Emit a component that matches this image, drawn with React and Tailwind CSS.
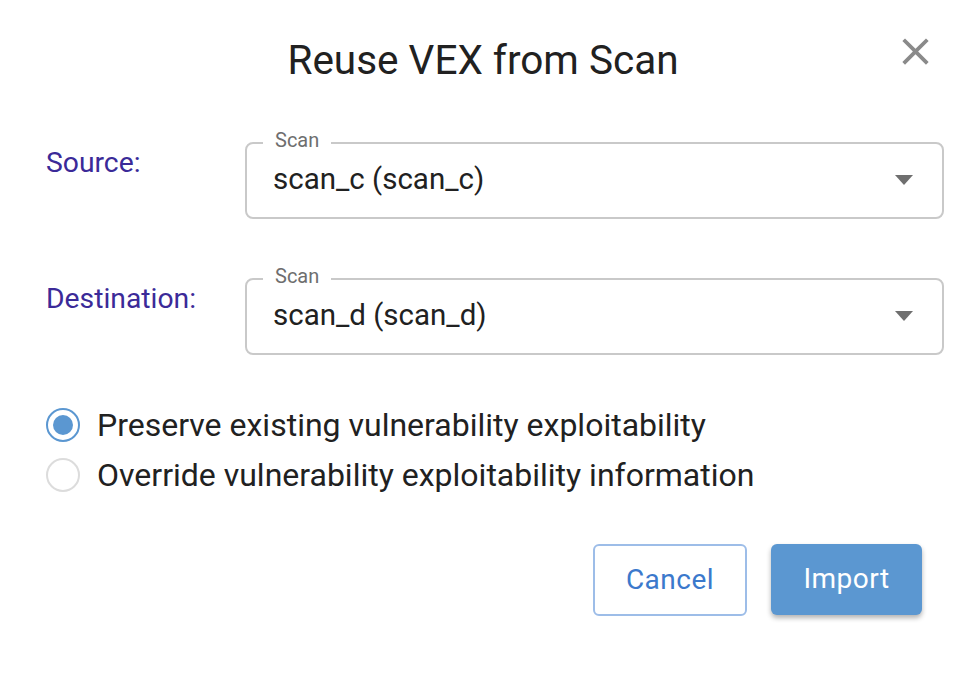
import React from "react";

function SelectBox({ value }) {
  return (
    <div className="relative flex-1 h-[77px] rounded-lg border-2 border-[#c9c9c9] flex items-center pl-[26px] pr-[29px]">
      <span className="absolute left-[16px] top-[-14px] bg-white px-3 text-[20px] leading-none text-[#6e6e6e]">
        Scan
      </span>
      <span className="flex-1 text-[29.5px] leading-none text-[#212121]">{value}</span>
      <svg width="18" height="10" viewBox="0 0 18 10" className="block">
        <polygon points="0,0 18,0 9,10" fill="#6f6f6f" />
      </svg>
    </div>
  );
}

function Radio({ checked, label }) {
  return (
    <div className="flex items-center h-[50px]">
      {checked ? (
        <span className="w-[34px] h-[34px] rounded-full border-2 border-[#5b97d1] flex items-center justify-center">
          <span className="w-[20px] h-[20px] rounded-full bg-[#5b97d1]" />
        </span>
      ) : (
        <span className="w-[34px] h-[34px] rounded-full border-2 border-[#dcdcdc]" />
      )}
      <span className="ml-[17px] text-[32px] leading-none text-[#212121]">{label}</span>
    </div>
  );
}

export default function App() {
  return (
    <div
      className="w-[966px] h-[682px] bg-white flex flex-col"
      style={{ fontFamily: "Roboto, 'Open Sans', sans-serif" }}
    >
      <div className="grid grid-cols-[1fr_auto_1fr] items-start pt-[40px]">
        <div />
        <h2 className="text-[40.5px] leading-none text-[#212121] font-normal">Reuse VEX from Scan</h2>
        <div className="flex justify-end pr-[28px]">
          <svg width="45" height="45" viewBox="0 0 24 24" className="block -mt-[11px]">
            <path
              fill="#8a8a8a"
              d="M19 6.41 17.59 5 12 10.59 6.41 5 5 6.41 10.59 12 5 17.59 6.41 19 12 13.41 17.59 19 19 17.59 13.41 12z"
            />
          </svg>
        </div>
      </div>

      <div className="flex flex-col pl-[46px] pr-[22px] mt-[61px] gap-[59px]">
        <div className="flex items-start">
          <div className="w-[199px] pt-[7px] text-[28.3px] leading-none text-[#3b2a98]">Source:</div>
          <SelectBox value="scan_c (scan_c)" />
        </div>
        <div className="flex items-start">
          <div className="w-[199px] pt-[7px] text-[28.3px] leading-none text-[#3b2a98]">Destination:</div>
          <SelectBox value="scan_d (scan_d)" />
        </div>
      </div>

      <div className="flex flex-col pl-[46px] mt-[45px]">
        <Radio checked label="Preserve existing vulnerability exploitability" />
        <Radio label="Override vulnerability exploitability information" />
      </div>

      <div className="flex justify-end gap-[24px] pr-[44px] mt-[44px]">
        <button className="w-[154px] h-[72px] rounded-md border-2 border-[#9dbde8] bg-white text-[28px] tracking-[0.5px] text-[#3b79cc]">
          Cancel
        </button>
        <button className="w-[151px] h-[71px] rounded-md bg-[#5b97d1] text-[28px] tracking-[0.5px] text-white shadow-[0_3px_5px_rgba(0,0,0,0.3)]">
          Import
        </button>
      </div>
    </div>
  );
}
